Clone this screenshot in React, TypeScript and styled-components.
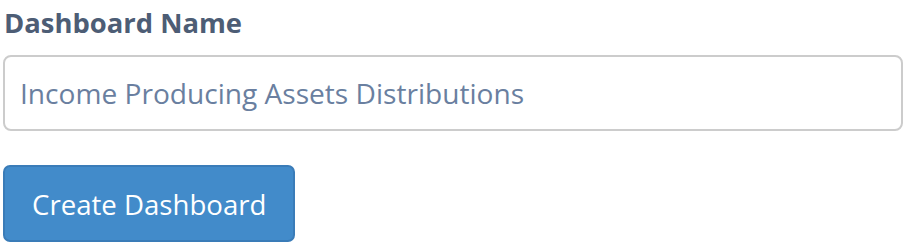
import React from "react";
import styled, { createGlobalStyle } from "styled-components";

const Global = createGlobalStyle`
  html, body { margin: 0; padding: 0; background: #fff; }
  body { font-family: "Open Sans", "Noto Sans", sans-serif; }
`;

const Form = styled.div`
  display: flex;
  flex-direction: column;
  align-items: flex-start;
  padding: 0 6px 0 3px;
  width: 909px;
  box-sizing: border-box;
`;

const Label = styled.label`
  font-size: 27.4px;
  font-weight: 700;
  color: #4d5d75;
  line-height: 44px;
  margin-top: 1px;
  margin-left: 1px;
`;

const Input = styled.input`
  margin-top: 10px;
  width: 100%;
  height: 76px;
  box-sizing: border-box;
  border: 2px solid #cccccc;
  border-radius: 8px;
  padding: 0 15px;
  font-family: inherit;
  font-size: 28.1px;
  color: #6a7fa0;
  outline: none;
  &::placeholder { color: #6a7fa0; }
`;

const Button = styled.button`
  margin-top: 34px;
  height: 77px;
  padding: 0 27px;
  background: #428bca;
  border: 2px solid #3a7cb8;
  border-radius: 7px;
  color: #fff;
  font-family: inherit;
  font-size: 27.6px;
`;

export default function App() {
  return (
    <>
      <Global />
      <Form>
        <Label>Dashboard Name</Label>
        <Input placeholder="Income Producing Assets Distributions" />
        <Button>Create Dashboard</Button>
      </Form>
    </>
  );
}
